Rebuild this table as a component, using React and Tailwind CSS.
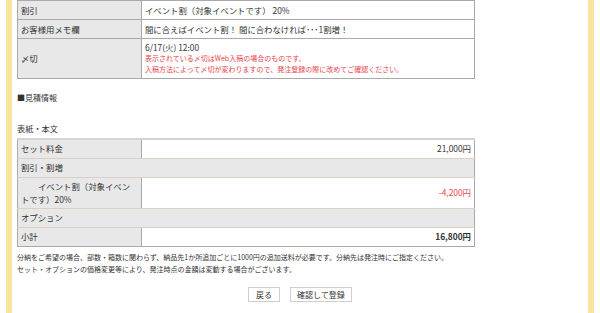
import React from 'react'

const font = { fontFamily: '"Noto Sans CJK JP", "Noto Sans", sans-serif' }

// dotted yellow guide strip on either side of the page
const DotBand = () => (
  <div className="w-[6px] shrink-0 bg-[radial-gradient(circle,#f8e39a_0.7px,transparent_0.85px)] bg-[length:2px_2px]" />
)

const Label = ({ children, className = '' }) => (
  <td className={`w-[124px] border border-[#a9a9a9] bg-[#e8e8e8] px-[3px] align-middle ${className}`}>
    {children}
  </td>
)

const Summary = () => (
  <table className="w-[458px] border-collapse text-[8.4px] leading-[11px] text-[#333]">
    <tbody>
      <tr className="h-[19px]">
        <Label>割引</Label>
        <td className="border border-[#a9a9a9] px-[3px]">イベント割（対象イベントです） 20%</td>
      </tr>
      <tr className="h-[19px]">
        <Label>お客様用メモ欄</Label>
        <td className="border border-[#a9a9a9] px-[3px]">間に合えばイベント割！ 間に合わなければ･･･1割増！</td>
      </tr>
      <tr className="h-[40px]">
        <Label>〆切</Label>
        <td className="border border-[#a9a9a9] px-[3px] align-top pt-[3px]">
          <div className="leading-[11px]">6/17(火) 12:00</div>
          <div className="text-[7px] leading-[11px] text-[#e9444e]">
            表示されている〆切はWeb入稿の場合のものです。
            <br />
            入稿方法によって〆切が変わりますので、発注登録の際に改めてご確認ください。
          </div>
        </td>
      </tr>
    </tbody>
  </table>
)

const Estimate = () => {
  const cell = 'border-b border-b-[#d9d0c2] border-r border-r-[#a9a9a9] px-[3px]'
  return (
    <table className="w-[458px] border-collapse border-t-2 border-t-[#d4d4d4] border-l border-l-[#a9a9a9] border-b border-b-[#a9a9a9] text-[8.4px] leading-[13px] text-[#333]">
      <tbody>
        <tr className="h-[19px]">
          <td className={`w-[124px] bg-[#e8e8e8] ${cell}`}>セット料金</td>
          <td className={`text-right ${cell}`}>21,000円</td>
        </tr>
        <tr className="h-[19px]">
          <td colSpan={2} className={`bg-[#e8e8e8] ${cell}`}>割引・割増</td>
        </tr>
        <tr className="h-[31px]">
          <td className={`w-[124px] bg-[#e8e8e8] indent-[17px] ${cell}`}>イベント割（対象イベントです）20%</td>
          <td className={`text-right text-[#e9444e] ${cell}`}>-4,200円</td>
        </tr>
        <tr className="h-[19px]">
          <td colSpan={2} className={`bg-[#e8e8e8] ${cell}`}>オプション</td>
        </tr>
        <tr className="h-[19px]">
          <td className="w-[124px] bg-[#e8e8e8] border-r border-r-[#a9a9a9] px-[3px]">小計</td>
          <td className="border-r border-r-[#a9a9a9] px-[3px] text-right font-bold">16,800円</td>
        </tr>
      </tbody>
    </table>
  )
}

const Button = ({ children, className = '' }) => (
  <button className={`h-[15px] border border-[#cfcfcf] bg-white text-[8px] leading-[13px] text-[#333] ${className}`}>
    {children}
  </button>
)

export default function App() {
  return (
    <div className="flex h-[313px] w-[600px] overflow-hidden bg-white" style={font}>
      <div className="w-[6px] shrink-0" />
      <DotBand />
      <div className="flex flex-1 flex-col px-[5px]">
        <Summary />

        <p className="mt-[13px] text-[8px] leading-[11px] text-[#333]">■見積情報</p>
        <p className="mt-[20px] text-[8.2px] leading-[11px] text-[#333]">表紙・本文</p>

        <div className="mt-[4px]">
          <Estimate />
        </div>

        <div className="mt-[4px] text-[7px] leading-[12px] text-[#333]">
          <p>分納をご希望の場合、部数・箱数に関わらず、納品先1か所追加ごとに1000円の追加送料が必要です。分納先は発注時にご指定ください。</p>
          <p>セット・オプションの価格変更等により、発注時点の金額は変動する場合がございます。</p>
        </div>

        <div className="mt-[12px] flex justify-center gap-[10px]">
          <Button className="w-[32px]">戻る</Button>
          <Button className="w-[62px]">確認して登録</Button>
        </div>
      </div>
      <DotBand />
      <div className="w-[6px] shrink-0" />
    </div>
  )
}
